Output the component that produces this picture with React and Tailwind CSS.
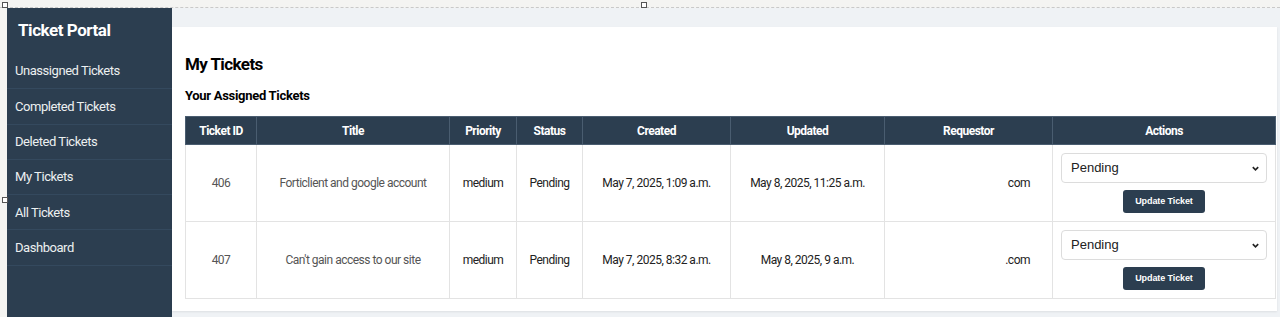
const navItems = [
  'Unassigned Tickets',
  'Completed Tickets',
  'Deleted Tickets',
  'My Tickets',
  'All Tickets',
  'Dashboard',
]

const tickets = [
  {
    id: 406,
    title: 'Forticlient and google account',
    priority: 'medium',
    status: 'Pending',
    created: 'May 7, 2025, 1:09 a.m.',
    updated: 'May 8, 2025, 11:25 a.m.',
    requestor: 'com',
  },
  {
    id: 407,
    title: "Can't gain access to our site",
    priority: 'medium',
    status: 'Pending',
    created: 'May 7, 2025, 8:32 a.m.',
    updated: 'May 8, 2025, 9 a.m.',
    requestor: '.com',
  },
]

const columns = [
  { label: 'Ticket ID', w: 'w-[71px]' },
  { label: 'Title', w: 'w-[193px]' },
  { label: 'Priority', w: 'w-[67px]' },
  { label: 'Status', w: 'w-[66px]' },
  { label: 'Created', w: 'w-[148px]' },
  { label: 'Updated', w: 'w-[154px]' },
  { label: 'Requestor', w: 'w-[168px]' },
  { label: 'Actions', w: 'w-[223px]' },
]

function Handle({ className }) {
  return (
    <div
      className={`absolute w-[6px] h-[6px] bg-white border border-[#555] ${className}`}
    />
  )
}

export default function App() {
  return (
    <div className="relative h-[317px] overflow-hidden bg-[#f4f4f2] font-['Roboto',sans-serif]">
      <div className="h-[8px] border-b border-dashed border-[#c9c9c9]" />
      <div className="flex h-[309px]">
        <aside className="ml-[7px] w-[165px] bg-[#2c3e50] text-white">
          <div className="h-[46px] pl-[11px] flex items-center text-[17px] font-bold tracking-[-0.45px] pb-[1px]">
            Ticket Portal
          </div>
          <nav className="flex flex-col">
            {navItems.map((item) => (
              <div
                key={item}
                className="h-[35.3px] pl-[8px] flex items-center border-b border-[#34495e] text-[13px] tracking-[-0.45px] text-[#ecf0f1]"
              >
                {item}
              </div>
            ))}
          </nav>
        </aside>
        <main className="flex-1 bg-[#eff2f5] pt-[19px] pr-[3px]">
          <div className="h-[284px] bg-white pl-[13px] pt-[27px] shadow-[0_1px_2px_rgba(0,0,0,0.08)]">
            <h1 className="text-[17px] font-bold text-black leading-[20px] tracking-[-0.6px]">
              My Tickets
            </h1>
            <h2 className="mt-[14px] text-[13px] font-bold text-black leading-[16px] tracking-[-0.3px]">
              Your Assigned Tickets
            </h2>
            <table className="mt-[12px] border-collapse table-fixed w-[1091px] text-[12px] tracking-[-0.5px]">
              <thead>
                <tr className="bg-[#2c3e50] text-white h-[28px]">
                  {columns.map((c) => (
                    <th
                      key={c.label}
                      className={`${c.w} border border-[#4a5d70] font-bold text-center`}
                    >
                      {c.label}
                    </th>
                  ))}
                </tr>
              </thead>
              <tbody>
                {tickets.map((t) => (
                  <tr key={t.id} className="h-[77px]">
                    <td className="border border-[#e3e3e3] text-center text-[#555]">{t.id}</td>
                    <td className="border border-[#e3e3e3] text-center text-[#555]">{t.title}</td>
                    <td className="border border-[#e3e3e3] text-center text-[#222]">{t.priority}</td>
                    <td className="border border-[#e3e3e3] text-center text-[#222]">{t.status}</td>
                    <td className="border border-[#e3e3e3] text-center text-[#222]">{t.created}</td>
                    <td className="border border-[#e3e3e3] text-center text-[#222]">{t.updated}</td>
                    <td className="border border-[#e3e3e3] text-right pr-[22px] text-[#222]">{t.requestor}</td>
                    <td className="border border-[#e3e3e3] px-[8px] tracking-normal">
                      <div className="flex flex-col items-center gap-[7px]">
                        <div className="w-full h-[30px] border border-[#dcdcdc] rounded-[4px] flex items-center justify-between pl-[9px] pr-[6px] font-['Liberation_Sans',sans-serif] text-[13px] text-[#222]">
                          <span>Pending</span>
                          <svg width="9" height="9" viewBox="0 0 10 10">
                            <path d="M2 3.5 L5 6.5 L8 3.5" fill="none" stroke="#222" strokeWidth="1.8" />
                          </svg>
                        </div>
                        <button className="h-[23px] px-[12px] rounded-[3px] bg-[#2c3e50] text-white text-[9px] font-bold tracking-[-0.1px] font-['Liberation_Sans',sans-serif]">
                          Update Ticket
                        </button>
                      </div>
                    </td>
                  </tr>
                ))}
              </tbody>
            </table>
          </div>
        </main>
      </div>
      <Handle className="left-[2px] top-[2px]" />
      <Handle className="left-[641px] top-[2px]" />
      <Handle className="left-[2px] top-[197px]" />
    </div>
  )
}
